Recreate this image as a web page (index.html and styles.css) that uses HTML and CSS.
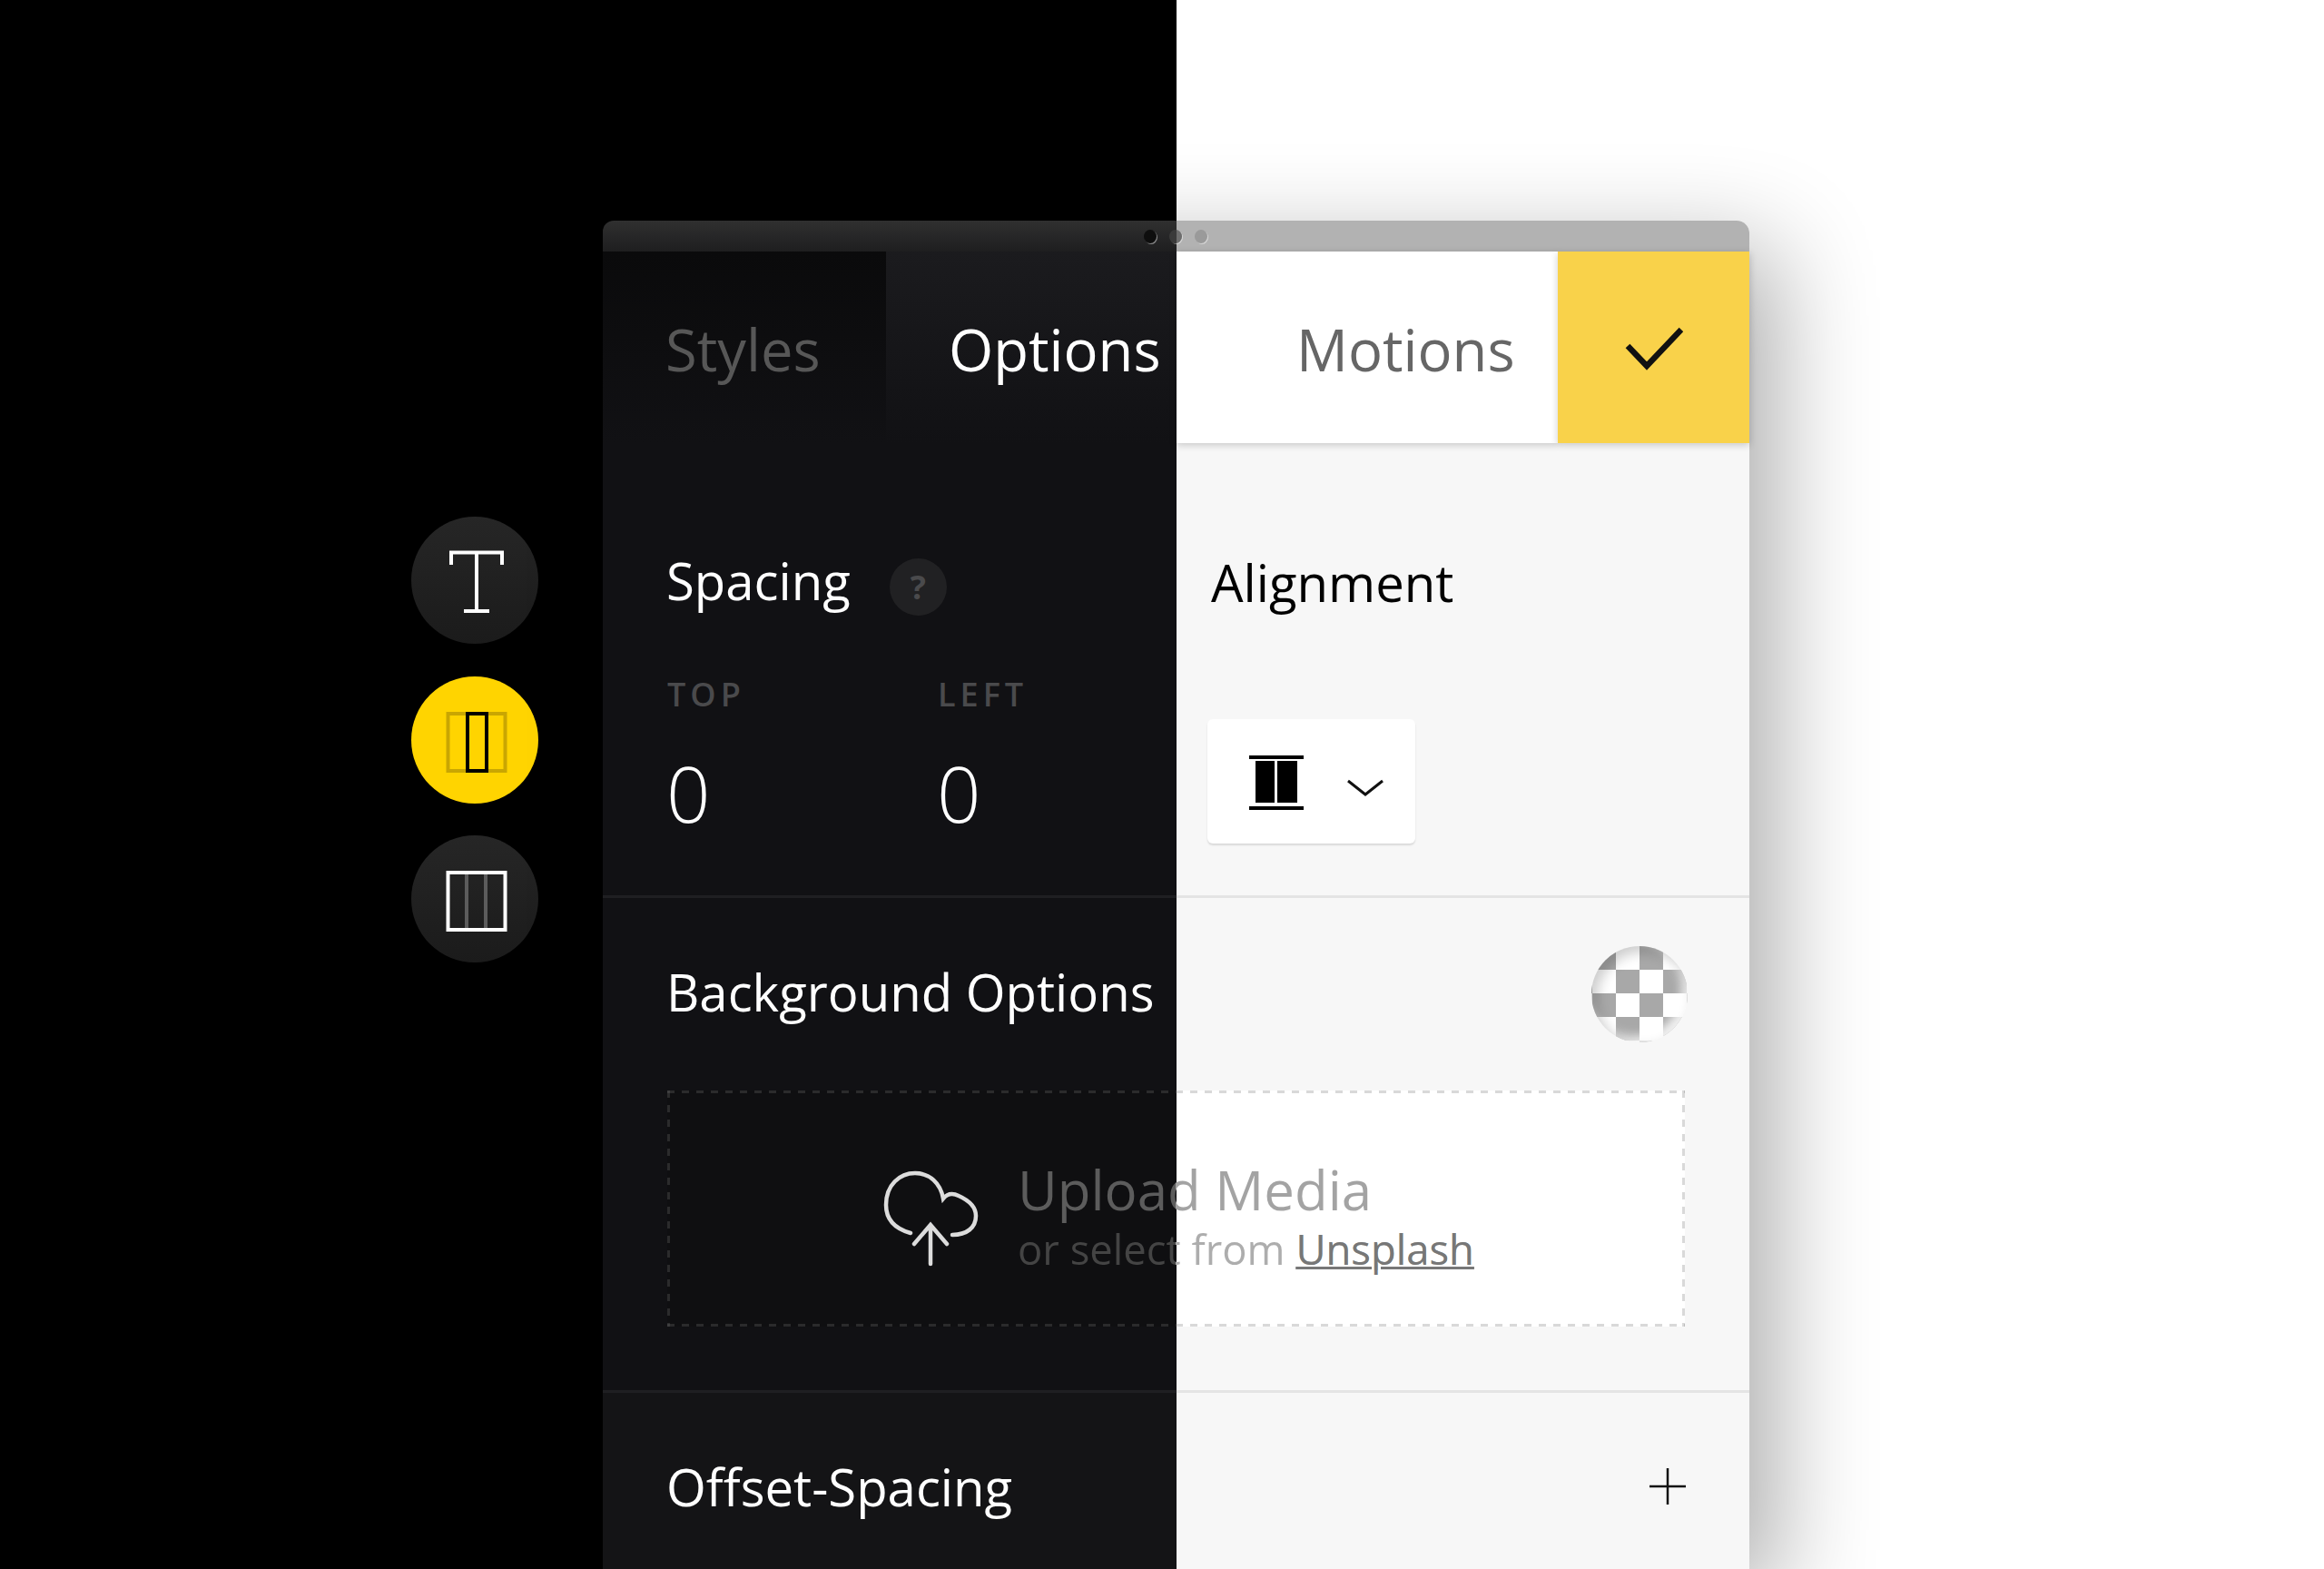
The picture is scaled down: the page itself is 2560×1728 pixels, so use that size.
FILE: index.html
```html
<!DOCTYPE html>
<html lang="en">

<head>
    <meta charset="UTF-8">
    <title>Options panel</title>
    <link rel="stylesheet" href="styles.css">
</head>

<body>
    <div class="stage">

        <div class="rail">
            <div class="tool">
                <svg width="140" height="140" viewBox="0 0 140 140" fill="none" stroke="#fff" stroke-width="4">
                    <path d="M44 53V39.500H100V53M72 39.500V104M58 104H86" />
                </svg>
            </div>
            <div class="tool tool-active">
                <svg width="140" height="140" viewBox="0 0 140 140" fill="none" stroke-width="4">
                    <rect x="40.500" y="41" width="63" height="63" stroke="#c9a602" />
                    <rect x="62" y="41" width="21" height="63" stroke="#000" />
                </svg>
            </div>
            <div class="tool">
                <svg width="140" height="140" viewBox="0 0 140 140" fill="none" stroke-width="4">
                    <path d="M61 41V104M82 41V104" stroke="#5c5c5c" />
                    <rect x="40.500" y="41" width="63" height="63" stroke="#fff" />
                </svg>
            </div>
        </div>

        <div class="panel">
            <div class="titlebar">
                <span class="dot dot-a"></span>
                <span class="dot dot-b"></span>
                <span class="dot dot-c"></span>
            </div>

            <div class="tabs">
                <div class="tab tab-styles">Styles</div>
                <div class="tab tab-options">Options</div>
                <div class="tab tab-motions">Motions</div>
                <div class="tab tab-check">
                    <svg width="64" height="50" viewBox="0 0 64 50" fill="none" stroke="#111" stroke-width="6.500">
                        <path d="M3 23L24 45L62 5" />
                    </svg>
                </div>
            </div>

            <div class="section section-one">
                <div class="spacing">
                    <div class="title-row">
                        <h2>Spacing</h2>
                        <span class="help">?</span>
                    </div>
                    <div class="fields">
                        <div class="field">
                            <div class="field-label">TOP</div>
                            <div class="field-value">0</div>
                        </div>
                        <div class="field">
                            <div class="field-label">LEFT</div>
                            <div class="field-value">0</div>
                        </div>
                    </div>
                </div>
                <div class="alignment">
                    <h2>Alignment</h2>
                    <div class="select">
                        <svg width="60" height="60" viewBox="0 0 60 60">
                            <path d="M0 0H60V4H0ZM0 56H60V60H0ZM7 6H28V52H7ZM31 6H53V52H31Z" />
                        </svg>
                        <svg class="chevron" width="40" height="20" viewBox="0 0 40 20" fill="none" stroke="#111" stroke-width="3">
                            <path d="M1 2L20 17L39 2" />
                        </svg>
                    </div>
                </div>
            </div>

            <div class="section section-two">
                <div class="bg-row">
                    <h2>Background Options</h2>
                    <div class="checker"></div>
                </div>
                <div class="upload">
                    <svg class="cloud" width="110" height="108" viewBox="0 0 110 108" fill="none" stroke="#dcdcdc" stroke-width="4.500" stroke-linecap="round">
                        <path d="M33 71C15 66 6 55 6 40C6 18 21 5 38 5C54 5 66 16 69 33C74 27 80 27 86 30C97 35 105 42 105 52C105 65 95 73 79 73" />
                        <path d="M55 105V63M37 83L55 62L73 83" />
                    </svg>
                    <div class="upload-text">
                        <div class="upload-title">Upload Media</div>
                        <div class="upload-sub">or select from <a class="upload-link">Unsplash</a></div>
                    </div>
                </div>
            </div>

            <div class="section section-three">
                <h2>Offset-Spacing</h2>
                <svg width="40" height="40" viewBox="0 0 40 40" stroke="#111" stroke-width="2.500">
                    <path d="M20 0V40M0 20H40" />
                </svg>
            </div>
        </div>

    </div>
</body>

</html>
```

FILE: styles.css
```css
html,
body {
    margin: 0;
    height: 1728px;
    overflow: hidden;
}

body {
    font-family: 'Open Sans', sans-serif;
    font-weight: 400;
}

.stage {
    display: flex;
    align-items: flex-start;
    width: 2560px;
    height: 1728px;
    box-sizing: border-box;
    padding-left: 453px;
    background: linear-gradient(90deg, #000 1296px, #fff 1296px);
}

/* tool rail */
.rail {
    width: 140px;
    flex: none;
    margin-top: 569px;
    margin-right: 71px;
    display: flex;
    flex-direction: column;
    gap: 35.500px;
}

.tool {
    width: 140px;
    height: 140px;
    border-radius: 50%;
    background: linear-gradient(#262626, #1b1b1b);
}

.tool svg {
    display: block;
}

.tool-active {
    background: #ffd400;
}

/* panel */
.panel {
    width: 1263px;
    height: 1485px;
    flex: none;
    margin-top: 243px;
    border-radius: 12px 14px 0 0;
    box-shadow: 30px 30px 110px rgba(0, 0, 0, 0.32);
}

.titlebar {
    height: 34px;
    box-sizing: border-box;
    padding-left: 596px;
    display: flex;
    align-items: center;
    gap: 14px;
    border-radius: 12px 14px 0 0;
    background:
        linear-gradient(90deg, transparent 632px, #b2b2b2 632px),
        linear-gradient(#303030, #1e1e1f);
}

.dot {
    width: 14px;
    height: 15px;
    flex: none;
    border-radius: 50%;
    margin-top: 1px;
    box-shadow: 1px 1px 0 rgba(255, 255, 255, 0.45);
}

.dot-a {
    background-color: #0e0e0e;
}

.dot-b {
    background: linear-gradient(90deg, #3a3a3a 8px, #6d6d6d 8px);
}

.dot-c {
    background-color: #9a9a9a;
}

.tabs {
    display: flex;
    height: 211px;
    font-size: 63.300px;
    position: relative;
    z-index: 1;
}

.tab {
    display: flex;
    align-items: center;
    box-sizing: border-box;
    padding-top: 3px;
}

.tab-styles {
    width: 312px;
    padding-left: 69px;
    color: #575757;
    background: linear-gradient(#0a0a0b, #111114);
}

.tab-options {
    width: 320px;
    padding-left: 69px;
    color: #fff;
    background: linear-gradient(#1b1b1e, #111114);
}

.tab-motions {
    width: 420px;
    padding-left: 132px;
    color: #666;
    background-color: #fff;
    box-shadow: 0 2px 8px rgba(0, 0, 0, 0.2);
}

.tab-check {
    width: 211px;
    padding-top: 0;
    justify-content: center;
    background-color: #f9d24a;
    box-shadow: 0 2px 8px rgba(0, 0, 0, 0.2);
}

/* sections */
.section {
    box-sizing: border-box;
    background: linear-gradient(90deg, #111114 632px, #f7f7f7 632px);
    color: #fff;
}

.section-one,
.section-two {
    border-bottom: 3px solid;
    border-image: linear-gradient(90deg, #1f1f22 632px, #e4e4e4 632px) 1;
}

h2 {
    margin: 0 0 0 -1px;
    font-size: 56.300px;
    font-weight: 400;
    line-height: 80px;
}

.section-one {
    height: 501px;
    display: flex;
}

.spacing {
    width: 632px;
    flex: none;
    box-sizing: border-box;
    padding: 111px 0 0 71px;
}

.title-row {
    display: flex;
    align-items: center;
    gap: 43px;
}

.help {
    width: 63px;
    height: 63px;
    margin-top: 15px;
    border-radius: 50%;
    background-color: #212123;
    color: #4a4a4c;
    font-size: 36px;
    font-weight: 700;
    text-align: center;
    line-height: 63px;
}

.fields {
    display: flex;
    margin-top: 61px;
}

.field {
    width: 298px;
    flex: none;
}

.field-label {
    font-size: 36px;
    font-weight: 600;
    letter-spacing: 5px;
    color: #4a4a4c;
    line-height: 50px;
}

.field-value {
    font-size: 85px;
    font-weight: 300;
    line-height: 110px;
    margin-top: 28px;
    margin-left: -1px;
}

.alignment {
    padding: 113px 0 0 39px;
    color: #000;
}

.select {
    width: 229px;
    height: 137px;
    margin: 111px 0 0 -5px;
    background-color: #fff;
    border-radius: 6px;
    box-shadow: 0 2px 2px rgba(0, 0, 0, 0.12);
    display: flex;
    align-items: flex-start;
}

.select svg {
    margin: 40px 0 0 46px;
    flex: none;
}

.select .chevron {
    margin: 66px 0 0 48px;
}

.section-two {
    height: 545px;
    padding: 53px 71px 0;
}

.bg-row {
    display: flex;
    justify-content: space-between;
    align-items: center;
    height: 106px;
}

.bg-row h2 {
    margin-top: -6px;
}

.checker {
    width: 106px;
    height: 106px;
    margin-right: -3px;
    border-radius: 50%;
    background: repeating-conic-gradient(#fff 0 25%, #a8a8a8 0 50%) 1px 0 / 52px 52px;
    box-shadow: inset 6px 6px 14px rgba(0, 0, 0, 0.2), inset -6px -6px 12px rgba(255, 255, 255, 0.9);
}

.upload {
    --dash: rgba(116, 116, 116, 0.275);
    width: 1121px;
    height: 260px;
    margin-top: 53px;
    box-sizing: border-box;
    padding-left: 235px;
    display: flex;
    align-items: flex-start;
    background-color: #fff;
    background-image:
        linear-gradient(90deg, var(--dash) 50%, transparent 50%),
        linear-gradient(90deg, var(--dash) 50%, transparent 50%),
        linear-gradient(var(--dash) 50%, transparent 50%),
        linear-gradient(var(--dash) 50%, transparent 50%),
        linear-gradient(90deg, #0f0f11 561px, #fff 561px);
    background-repeat: repeat-x, repeat-x, repeat-y, repeat-y, no-repeat;
    background-position: 0 0, 0 100%, 0 0, 100% 0, 0 0;
    background-size: 16px 3px, 16px 3px, 3px 16px, 3px 16px, 100% 100%;
}

.cloud {
    margin-top: 86px;
    flex: none;
}

.upload-text {
    margin-left: 41px;
    padding-top: 67px;
}

/* one line of text crosses the dark/light edge, so its colour is split at that edge */
.upload-title,
.upload-sub {
    width: max-content;
    -webkit-background-clip: text;
    background-clip: text;
    -webkit-text-fill-color: transparent;
}

.upload-title {
    font-size: 60px;
    line-height: 84px;
    color: #a3a3a3;
    background-image: linear-gradient(90deg, #5c5c5c 174px, #a3a3a3 174px);
}

.upload-sub {
    font-size: 45.400px;
    line-height: 48px;
    margin-top: -1px;
    color: #adadad;
    background-image: linear-gradient(90deg, #444 174px, #adadad 174px);
}

.upload-link {
    -webkit-text-fill-color: #777;
    color: #777;
    text-decoration: underline;
    text-decoration-thickness: 3px;
}

.section-three {
    height: 195px;
    padding: 63px 70px 0 71px;
    display: flex;
    justify-content: space-between;
    align-items: flex-start;
    background: linear-gradient(90deg, #141416 632px, #f7f7f7 632px);
}

.section-three svg {
    margin-top: 20px;
}
```
